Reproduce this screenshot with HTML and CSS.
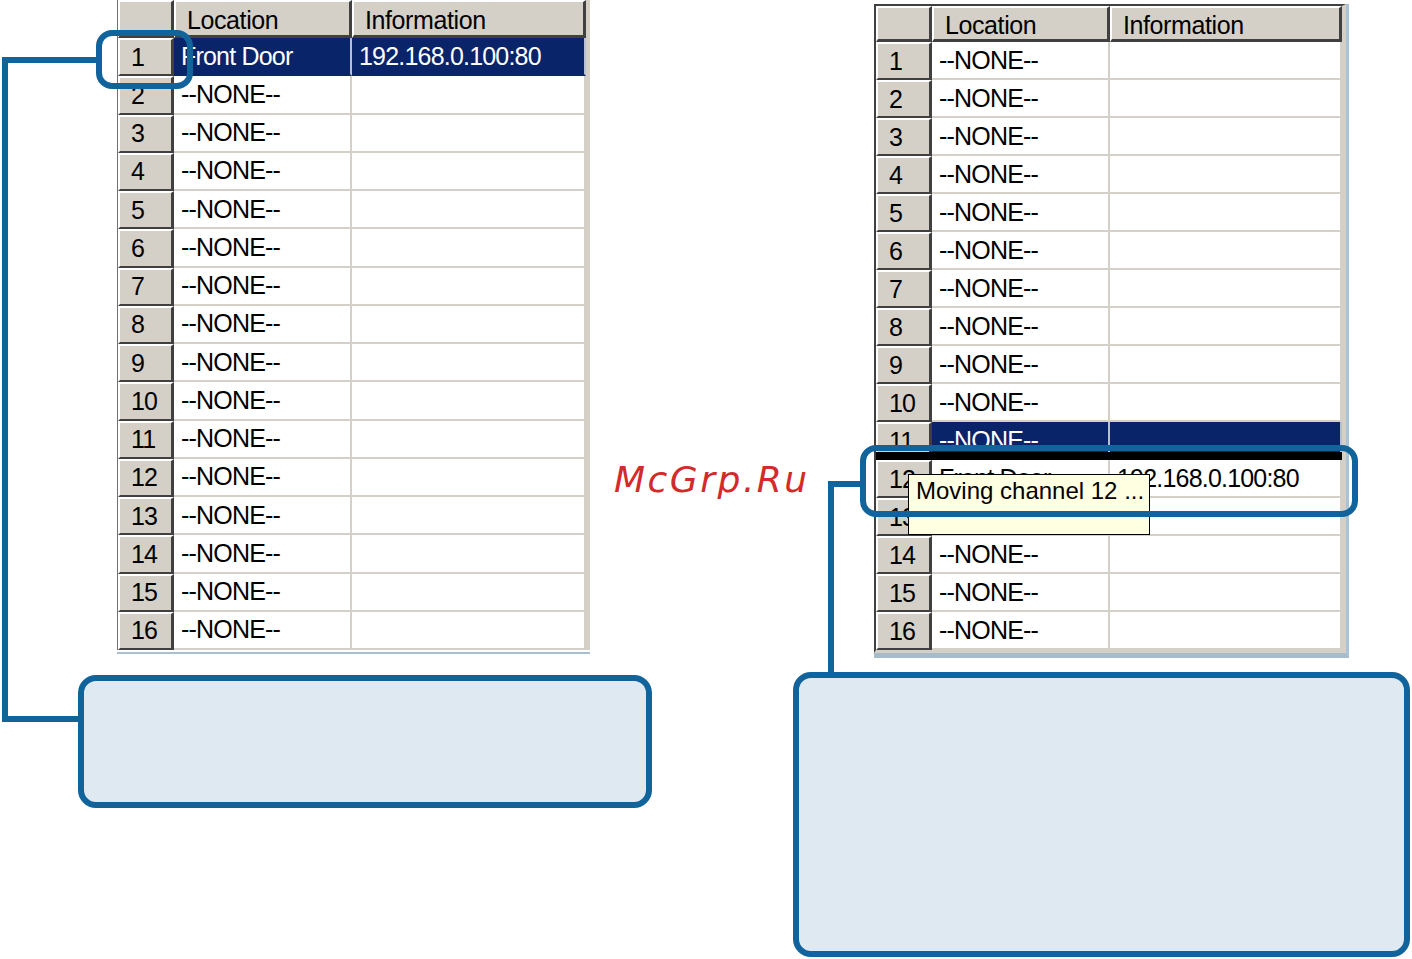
FILE: index.html
```html
<!DOCTYPE html>
<html lang="en">
<head>
    <meta charset="UTF-8">
    <meta name="viewport" content="width=device-width, initial-scale=1.0">
    <title>Channel list</title>
    <link rel="stylesheet" href="styles.css">
</head>
<body>
    <div class="page">
        <section class="panel panel-left">
            <div class="frame frame-left">
                <div class="grid grid-left">
                    <div class="row head-row"><div class="head"></div><div class="head">Location</div><div class="head">Information</div></div>
                    <div class="row sel"><div class="num">1</div><div class="cell">Front Door</div><div class="cell">192.168.0.100:80</div></div>
                    <div class="row"><div class="num">2</div><div class="cell">--NONE--</div><div class="cell"></div></div>
                    <div class="row"><div class="num">3</div><div class="cell">--NONE--</div><div class="cell"></div></div>
                    <div class="row"><div class="num">4</div><div class="cell">--NONE--</div><div class="cell"></div></div>
                    <div class="row"><div class="num">5</div><div class="cell">--NONE--</div><div class="cell"></div></div>
                    <div class="row"><div class="num">6</div><div class="cell">--NONE--</div><div class="cell"></div></div>
                    <div class="row"><div class="num">7</div><div class="cell">--NONE--</div><div class="cell"></div></div>
                    <div class="row"><div class="num">8</div><div class="cell">--NONE--</div><div class="cell"></div></div>
                    <div class="row"><div class="num">9</div><div class="cell">--NONE--</div><div class="cell"></div></div>
                    <div class="row"><div class="num">10</div><div class="cell">--NONE--</div><div class="cell"></div></div>
                    <div class="row"><div class="num">11</div><div class="cell">--NONE--</div><div class="cell"></div></div>
                    <div class="row"><div class="num">12</div><div class="cell">--NONE--</div><div class="cell"></div></div>
                    <div class="row"><div class="num">13</div><div class="cell">--NONE--</div><div class="cell"></div></div>
                    <div class="row"><div class="num">14</div><div class="cell">--NONE--</div><div class="cell"></div></div>
                    <div class="row"><div class="num">15</div><div class="cell">--NONE--</div><div class="cell"></div></div>
                    <div class="row"><div class="num">16</div><div class="cell">--NONE--</div><div class="cell"></div></div>
                </div>
            </div>
            <div class="note note-left"></div>
        </section>

        <section class="panel panel-right">
            <div class="frame frame-right">
                <div class="grid grid-right">
                    <div class="row head-row"><div class="head"></div><div class="head">Location</div><div class="head">Information</div></div>
                    <div class="row"><div class="num">1</div><div class="cell">--NONE--</div><div class="cell"></div></div>
                    <div class="row"><div class="num">2</div><div class="cell">--NONE--</div><div class="cell"></div></div>
                    <div class="row"><div class="num">3</div><div class="cell">--NONE--</div><div class="cell"></div></div>
                    <div class="row"><div class="num">4</div><div class="cell">--NONE--</div><div class="cell"></div></div>
                    <div class="row"><div class="num">5</div><div class="cell">--NONE--</div><div class="cell"></div></div>
                    <div class="row"><div class="num">6</div><div class="cell">--NONE--</div><div class="cell"></div></div>
                    <div class="row"><div class="num">7</div><div class="cell">--NONE--</div><div class="cell"></div></div>
                    <div class="row"><div class="num">8</div><div class="cell">--NONE--</div><div class="cell"></div></div>
                    <div class="row"><div class="num">9</div><div class="cell">--NONE--</div><div class="cell"></div></div>
                    <div class="row"><div class="num">10</div><div class="cell">--NONE--</div><div class="cell"></div></div>
                    <div class="row sel"><div class="num">11</div><div class="cell">--NONE--</div><div class="cell"></div></div>
                    <div class="row"><div class="num">12</div><div class="cell">Front Door</div><div class="cell">192.168.0.100:80</div></div>
                    <div class="row"><div class="num">13</div><div class="cell">--NONE--</div><div class="cell"></div></div>
                    <div class="row"><div class="num">14</div><div class="cell">--NONE--</div><div class="cell"></div></div>
                    <div class="row"><div class="num">15</div><div class="cell">--NONE--</div><div class="cell"></div></div>
                    <div class="row"><div class="num">16</div><div class="cell">--NONE--</div><div class="cell"></div></div>

                    <!-- drag insertion line and tooltip -->
                    <div class="drop-line"></div>
                    <div class="tip">Moving channel 12 ...</div>
                </div>
            </div>
            <div class="note note-right"></div>
        </section>

        <div class="watermark">McGrp.Ru</div>

        <svg class="callouts" width="1412" height="959" viewBox="0 0 1412 959">
            <rect x="99" y="33" width="91" height="53" rx="13" />
            <polyline points="99,60 5,60 5,719 81,719" />
            <rect x="863" y="448" width="492" height="66" rx="13" />
            <polyline points="863,484 831,484 831,675" />
        </svg>
    </div>
</body>
</html>
```

FILE: styles.css
```css
body {
    margin: 0;
    background: #fff;
    font-family: "Liberation Sans", Arial, sans-serif;
}

.page {
    position: relative;
    display: flex;
    align-items: flex-start;
    width: 1412px;
    height: 959px;
    overflow: hidden;
}

.panel {
    display: flex;
    flex-direction: column;
}

.panel-left {
    margin-left: 78px;
    width: 574px;
}

.panel-right {
    margin-left: 141px;
    width: 617px;
}

/* table frames */
.frame-left {
    align-self: flex-start;
    margin-left: 39px;
    padding-bottom: 2px;
    border-bottom: 2px solid #a9c0d2;
}

.frame-right {
    align-self: flex-start;
    margin-left: 81px;
    margin-top: 4px;
    border-right: 3px solid #a9c4d8;
    border-bottom: 5px solid #a6bccb;
}

.grid {
    position: relative;
    display: flex;
    flex-direction: column;
    background: #d4d0c8;
}

.grid-left {
    border-left: 1px solid #707070;
    border-right: 4px solid #d4d0c8;
}

.grid-right {
    border-left: 2px solid #404040;
    border-top: 2px solid #404040;
    border-right: 4px solid #d4d0c8;
    border-bottom: 3px solid #d4d0c8;
}

.row {
    display: grid;
    grid-template-columns: 56px 178px 234px;
    height: 38.25px;
    font-size: 25px;
    letter-spacing: -0.8px;
    color: #000;
}

.grid-right .row {
    grid-template-columns: 56px 178px 232px;
    height: 38px;
}

.head-row {
    height: 38px;
    letter-spacing: -0.4px;
}

.grid-right .head-row {
    height: 36px;
}

.head, .num, .cell {
    box-sizing: border-box;
    display: flex;
    align-items: center;
    overflow: hidden;
    white-space: nowrap;
}

.head {
    background: #d4d0c8;
    border-top: 2px solid #fff;
    border-left: 2px solid #fff;
    border-right: 3px solid #404040;
    border-bottom: 3px solid #404040;
    padding: 3px 0 0 11px;
}

.num {
    background: #d4d0c8;
    border-top: 2px solid #fff;
    border-left: 2px solid #fff;
    border-right: 3px solid #404040;
    border-bottom: 2px solid #404040;
    padding-left: 11px;
}

.cell {
    background: #fff;
    border-right: 2px solid #d4d0c8;
    border-bottom: 2px solid #d4d0c8;
    padding-left: 7px;
}

.sel .cell {
    background: #0a246a;
    color: #fff;
    border-right-color: #b9bfd2;
    border-bottom-color: #0a246a;
}

.drop-line {
    position: absolute;
    left: 0;
    top: 446px;
    width: 466px;
    height: 8px;
    background: #000;
}

.tip {
    position: absolute;
    left: 32px;
    top: 468px;
    box-sizing: border-box;
    width: 242px;
    height: 61px;
    padding: 2px 0 0 7px;
    background: #ffffe1;
    border: 1px solid #000;
    font-size: 24px;
    line-height: 28px;
    white-space: nowrap;
}

/* callout boxes */
.note {
    box-sizing: border-box;
    border: 6px solid #10639b;
    border-radius: 18px;
    background: #dfe9f2;
}

.note-left {
    margin-top: 21px;
    height: 133px;
}

.note-right {
    margin-top: 14px;
    height: 285px;
}

.watermark {
    position: absolute;
    left: 614px;
    top: 462px;
    font-family: "DejaVu Sans", sans-serif;
    font-style: oblique;
    font-size: 36px;
    line-height: 36px;
    letter-spacing: 2.5px;
    color: #d42a2a;
}

.callouts {
    position: absolute;
    left: 0;
    top: 0;
    pointer-events: none;
    fill: none;
    stroke: #10639b;
    stroke-width: 6;
}
```
